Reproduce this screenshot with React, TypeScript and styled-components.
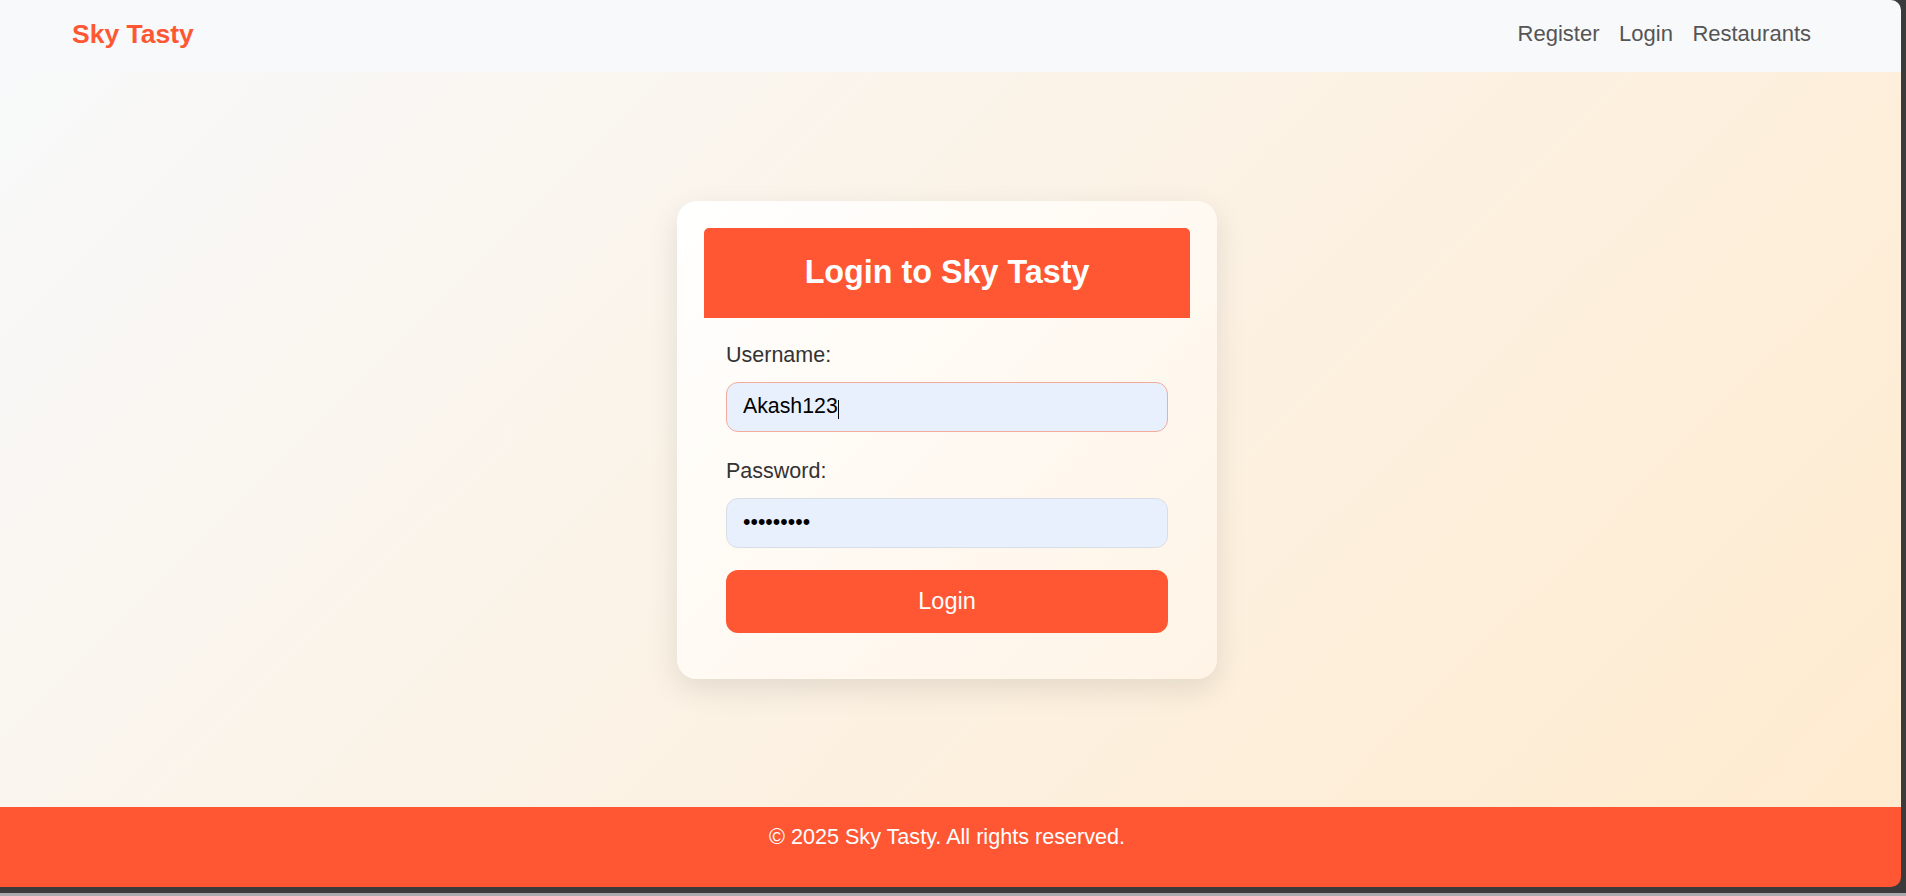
import React from "react";
import styled, { createGlobalStyle } from "styled-components";

const GlobalStyle = createGlobalStyle`
  html, body {
    margin: 0;
    padding: 0;
    width: 1906px;
    height: 896px;
    overflow: hidden;
    background: linear-gradient(to bottom, #3b3b3b 0, #3b3b3b 893px, #aca9ae 893px);
    font-family: "Liberation Sans", Arial, sans-serif;
  }
  * { box-sizing: border-box; }
`;

const Window = styled.div`
  width: 1901px;
  height: 887px;
  display: flex;
  flex-direction: column;
  border-radius: 0 10px 10px 0;
  overflow: hidden;
`;

const Header = styled.header`
  height: 72px;
  flex: 0 0 72px;
  background: #f8f9fa;
  display: flex;
  align-items: center;
  justify-content: space-between;
  padding: 0 90px 4px 72px;
`;

const Logo = styled.div`
  font-size: 26.5px;
  font-weight: 700;
  color: #ff5733;
`;

const Nav = styled.nav`
  display: flex;
  gap: 19.5px;
`;

const NavLink = styled.a`
  font-size: 22px;
  color: #555555;
  text-decoration: none;
`;

const Main = styled.main`
  flex: 1;
  display: flex;
  align-items: center;
  justify-content: center;
  padding-right: 7px;
  background: linear-gradient(135deg, #f8f9fa 0%, #ffebcf 100%);
`;

const Card = styled.div`
  width: 540px;
  padding: 27px 27px 46px;
  border-radius: 20px;
  background: linear-gradient(135deg, #ffffff 0%, #fff4e6 100%);
  box-shadow: 0 10px 30px rgba(0, 0, 0, 0.1);
`;

const CardHeader = styled.div`
  height: 90px;
  background: #ff5733;
  border-radius: 5px 5px 0 0;
  display: flex;
  align-items: center;
  justify-content: center;
`;

const Title = styled.h2`
  margin: 0;
  font-size: 32.3px;
  font-weight: 700;
  color: #ffffff;
`;

const Form = styled.form`
  display: flex;
  flex-direction: column;
  padding: 25px 22px 0;
`;

const Field = styled.div<{ $spacing: number }>`
  display: flex;
  flex-direction: column;
  margin-bottom: ${(p) => p.$spacing}px;
`;

const Label = styled.label`
  font-size: 21.5px;
  line-height: 25px;
  color: #333333;
  margin-bottom: 14px;
`;

const InputWrap = styled.div`
  position: relative;
`;

const Input = styled.input<{ $focused?: boolean }>`
  width: 100%;
  height: 50px;
  padding: 0 16px;
  border-radius: 12px;
  border: 1px solid ${(p) => (p.$focused ? "#f2ab9c" : "#d9dde6")};
  background: #e8f0fe;
  font-family: "Liberation Sans", Arial, sans-serif;
  font-size: 21.3px;
  color: #000000;
  outline: none;
`;

const Caret = styled.span`
  position: absolute;
  left: 112px;
  top: 18px;
  width: 1px;
  height: 19px;
  background: #000000;
`;

const Button = styled.button`
  height: 63px;
  border: none;
  border-radius: 12px;
  background: #ff5733;
  color: #ffffff;
  font-family: "Liberation Sans", Arial, sans-serif;
  font-size: 23.5px;
  cursor: pointer;
`;

const Footer = styled.footer`
  height: 80px;
  flex: 0 0 80px;
  background: #ff5733;
  color: #ffffff;
  text-align: center;
  font-size: 21.6px;
  padding: 17px 7px 0 0;
`;

export default function App() {
  return (
    <>
      <GlobalStyle />
      <Window>
        <Header>
          <Logo>Sky Tasty</Logo>
          <Nav>
            <NavLink href="#">Register</NavLink>
            <NavLink href="#">Login</NavLink>
            <NavLink href="#">Restaurants</NavLink>
          </Nav>
        </Header>
        <Main>
          <Card>
            <CardHeader>
              <Title>Login to Sky Tasty</Title>
            </CardHeader>
            <Form onSubmit={(e) => e.preventDefault()}>
              <Field $spacing={27}>
                <Label htmlFor="username">Username:</Label>
                <InputWrap>
                  <Input id="username" type="text" defaultValue="Akash123" $focused />
                  <Caret />
                </InputWrap>
              </Field>
              <Field $spacing={22}>
                <Label htmlFor="password">Password:</Label>
                <InputWrap>
                  <Input id="password" type="password" defaultValue="password1" />
                </InputWrap>
              </Field>
              <Button type="submit">Login</Button>
            </Form>
          </Card>
        </Main>
        <Footer>© 2025 Sky Tasty. All rights reserved.</Footer>
      </Window>
    </>
  );
}
